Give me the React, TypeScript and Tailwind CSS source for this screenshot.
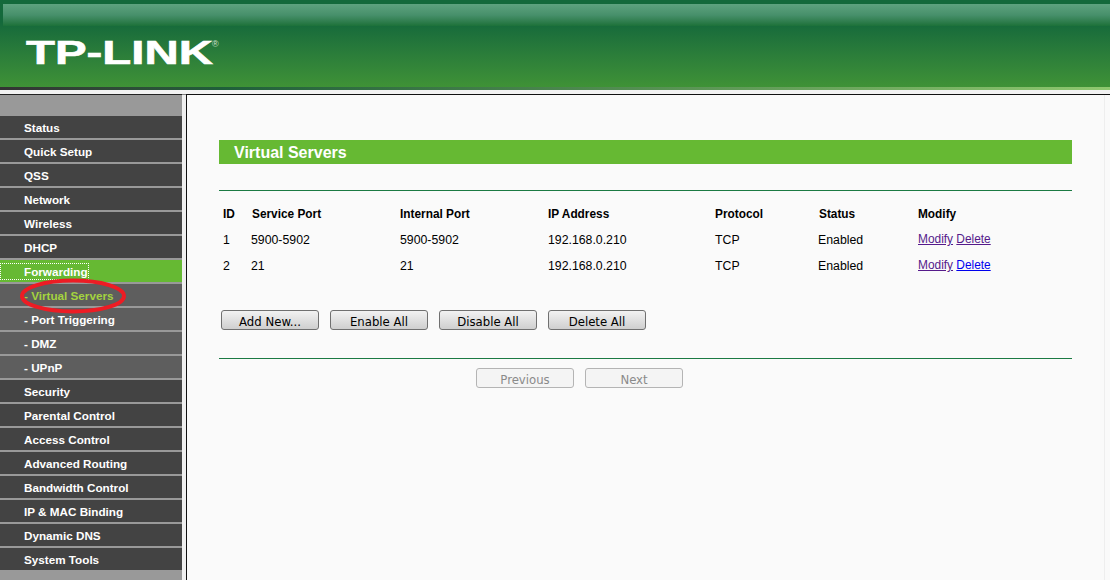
import React from 'react';

const arial = 'font-["Liberation_Sans",Arial,sans-serif]';

const menu = [
  { label: 'Status' },
  { label: 'Quick Setup' },
  { label: 'QSS' },
  { label: 'Network' },
  { label: 'Wireless' },
  { label: 'DHCP' },
  { label: 'Forwarding', active: true },
  { label: '- Virtual Servers', sub: true, current: true },
  { label: '- Port Triggering', sub: true },
  { label: '- DMZ', sub: true },
  { label: '- UPnP', sub: true },
  { label: 'Security' },
  { label: 'Parental Control' },
  { label: 'Access Control' },
  { label: 'Advanced Routing' },
  { label: 'Bandwidth Control' },
  { label: 'IP & MAC Binding' },
  { label: 'Dynamic DNS' },
  { label: 'System Tools' },
];

const rows = [
  { id: '1', service: '5900-5902', internal: '5900-5902', ip: '192.168.0.210', proto: 'TCP', status: 'Enabled', deleteSeen: true },
  { id: '2', service: '21', internal: '21', ip: '192.168.0.210', proto: 'TCP', status: 'Enabled', deleteSeen: false },
];

const PageButton = ({ label, disabled = false }: { label: string; disabled?: boolean }) => (
  <button
    className={`h-[20px] w-[98px] rounded-[3px] border pt-[2px] font-["DejaVu_Sans_Condensed","DejaVu_Sans",sans-serif] text-[13px] leading-none ${
      disabled
        ? 'border-[#b4b4b4] bg-[#f4f4f4] text-[#8a8a8a]'
        : 'border-[#707070] bg-gradient-to-b from-[#f2f2f2] to-[#cfcfcf] text-black'
    }`}
  >
    {label}
  </button>
);

const Sidebar = () => (
  <aside className={`relative flex w-[182px] shrink-0 flex-col gap-[2px] border-t border-[#222222] bg-[#999999] pt-[21px] pb-[10px] ${arial}`}>
    {menu.map((item) =>
      item.active ? (
        <div key={item.label} className="flex h-[22px] items-center bg-[#66b933] text-[11.7px] font-bold text-white">
          <span className="mt-[1px] flex h-[17px] w-[89px] items-center border border-dotted border-white pl-[23px]">{item.label}</span>
        </div>
      ) : (
        <div
          key={item.label}
          className={`flex h-[22px] items-center pl-[24px] pt-[2px] text-[11.7px] font-bold ${item.sub ? 'bg-[#5e5e5e]' : 'bg-[#434343]'} ${
            item.current ? 'text-[#a4d33f]' : 'text-white'
          }`}
        >
          {item.label}
        </div>
      ),
    )}
    {/* red marker someone drew round the current item */}
    <svg className="absolute left-[20px] top-[183px]" width="106" height="36" viewBox="0 0 106 36">
      <ellipse cx="53" cy="18" rx="51" ry="15.5" fill="none" stroke="#ed1c24" strokeWidth="4" />
    </svg>
  </aside>
);

export default function App() {
  return (
    <div className={`flex h-[580px] w-[1110px] flex-col overflow-hidden bg-white ${arial}`}>
      <header className="h-[87px] shrink-0 bg-gradient-to-b from-[#14693b] from-[25%] to-[#3f9236] pl-[3px] pt-[4px]">
        <div className="h-[22px] bg-gradient-to-b from-[#5ea27f] via-[#47906b] to-[#1c7139]" />
        <svg className="-ml-[3px] mt-[4px]" width="230" height="50" viewBox="0 0 230 50">
          <text
            x="26"
            y="34"
            fill="#ffffff"
            stroke="#ffffff"
            strokeWidth="0.6"
            fontFamily="Liberation Sans"
            fontWeight="700"
            fontSize="33"
            textLength="187"
            lengthAdjust="spacingAndGlyphs"
          >
            TP-LINK
          </text>
          <text x="212" y="17" fill="#cfe0cf" fontFamily="Liberation Sans" fontSize="9">
            ®
          </text>
        </svg>
      </header>
      <div className="h-[3px] shrink-0 bg-gradient-to-r from-[#333333] via-[#1f5f3a] via-[20%] to-[#8fc86f]" />
      <div className="h-[4px] shrink-0 bg-[#f2f2f2]" />
      <div className="flex min-h-0 flex-1">
        <Sidebar />
        <div className="w-[4px] shrink-0 border-t border-t-[#808080] bg-[#efefef]" />
        <main className="flex flex-1 justify-between border-l-[1px] border-t border-[#111111] bg-[#fafafa] pl-[32px]">
          <div className="w-[853px] pt-[45px]">
            <h1 className="flex h-[24px] items-center bg-[#66b933] pl-[15px] pt-[2px] text-[16px] font-bold text-white">Virtual Servers</h1>
            <div className="mt-[26px] h-[1px] bg-[#1b7a43]" />
            <table className="mt-[9px] w-full table-fixed text-left text-[12.3px] text-black">
              <colgroup>
                <col className="w-[32px]" />
                <col className="w-[149px]" />
                <col className="w-[148px]" />
                <col className="w-[167px]" />
                <col className="w-[103px]" />
                <col className="w-[100px]" />
                <col />
              </colgroup>
              <thead>
                <tr className="h-[26px] text-[11.85px] font-bold">
                  <th className="pl-[4px] pt-[3px]">ID</th>
                  <th className="pl-[1px] pt-[3px]">Service Port</th>
                  <th className="pt-[3px]">Internal Port</th>
                  <th className="pt-[3px]">IP Address</th>
                  <th className="pt-[3px]">Protocol</th>
                  <th className="pl-[1px] pt-[3px]">Status</th>
                  <th className="pt-[3px]">Modify</th>
                </tr>
              </thead>
              <tbody>
                {rows.map((row) => (
                  <tr key={row.id} className="h-[26px]">
                    <td className="pl-[4px] pt-[2px]">{row.id}</td>
                    <td className="pt-[2px]">{row.service}</td>
                    <td className="pt-[2px]">{row.internal}</td>
                    <td className="pt-[2px]">{row.ip}</td>
                    <td className="pt-[2px]">{row.proto}</td>
                    <td className="pt-[2px]">{row.status}</td>
                    <td className="pt-[2px] text-[11.9px]">
                      <a className="text-[#551a8b] underline">Modify</a>{' '}
                      <a className={`underline ${row.deleteSeen ? 'text-[#551a8b]' : 'text-[#0000ee]'}`}>Delete</a>
                    </td>
                  </tr>
                ))}
              </tbody>
            </table>
            <div className="mt-[32px] flex gap-[11px] pl-[2px]">
              <PageButton label="Add New..." />
              <PageButton label="Enable All" />
              <PageButton label="Disable All" />
              <PageButton label="Delete All" />
            </div>
            <div className="mt-[28px] h-[1px] bg-[#1b7a43]" />
            <div className="mt-[9px] flex gap-[11px] pl-[257px]">
              <PageButton label="Previous" disabled />
              <PageButton label="Next" disabled />
            </div>
          </div>
          <div className="mr-[5px] w-px bg-[#eeeeee]" />
        </main>
      </div>
    </div>
  );
}
